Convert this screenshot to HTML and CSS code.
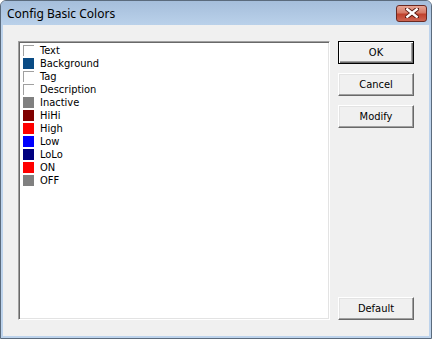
FILE: index.html
```html
<!DOCTYPE html>
<html>
<head>
<meta charset="utf-8">
<link rel="stylesheet" href="styles.css">
</head>
<body>
<div class="window">
  <div class="titlebar">
    <span class="title">Config Basic Colors</span>
    <div class="close">
      <svg width="14" height="10" viewBox="0 0 14 10">
        <path d="M2 1 L12 9 M12 1 L2 9" stroke="#5a1a10" stroke-width="4.2" stroke-linecap="square"/>
        <path d="M2.3 1.3 L11.7 8.7 M11.7 1.3 L2.3 8.7" stroke="#ffffff" stroke-width="2.4" stroke-linecap="square"/>
      </svg>
    </div>
  </div>
  <div class="client">
    <div class="listbox">
      <div class="item"><span class="sw sw-white"></span><span>Text</span></div>
      <div class="item"><span class="sw c-bg"></span><span>Background</span></div>
      <div class="item"><span class="sw sw-white"></span><span>Tag</span></div>
      <div class="item"><span class="sw sw-white"></span><span>Description</span></div>
      <div class="item"><span class="sw c-gray"></span><span>Inactive</span></div>
      <div class="item"><span class="sw c-maroon"></span><span>HiHi</span></div>
      <div class="item"><span class="sw c-red"></span><span>High</span></div>
      <div class="item"><span class="sw c-blue"></span><span>Low</span></div>
      <div class="item"><span class="sw c-navy"></span><span>LoLo</span></div>
      <div class="item"><span class="sw c-red"></span><span>ON</span></div>
      <div class="item"><span class="sw c-gray"></span><span>OFF</span></div>
    </div>
    <div class="buttons">
      <button class="btn btn-default">OK</button>
      <button class="btn">Cancel</button>
      <button class="btn">Modify</button>
      <div class="spacer"></div>
      <button class="btn">Default</button>
    </div>
  </div>
</div>
</body>
</html>
```

FILE: styles.css
```css
html, body {
  margin: 0;
  padding: 0;
  background: #ffffff;
}

.window {
  width: 432px;
  height: 339px;
  box-sizing: border-box;
  border: 1px solid #5b6b7d;
  border-radius: 6px 6px 0 0;
  background: #bdd3ec;
  display: flex;
  flex-direction: column;
  overflow: hidden;
}

.titlebar {
  height: 24px;
  display: flex;
  align-items: center;
  padding: 0 4px 0 6px;
  background: linear-gradient(#a5bedb, #bad1ea);
  flex: none;
}

.title {
  font-family: "Segoe UI", "Noto Sans", sans-serif;
  font-size: 12px;
  color: #000;
  flex: 1;
  padding-top: 1px;
}

.close {
  width: 29px;
  height: 15px;
  border: 1px solid #6b2a22;
  border-radius: 3px;
  background: linear-gradient(#e7a595 0%, #d67a66 45%, #c0412c 55%, #cd6552 100%);
  display: flex;
  align-items: center;
  justify-content: center;
}

.client {
  margin: 0 2px 2px 2px;
  flex: 1;
  background: #f0f0f0;
  display: flex;
  padding: 16px 15px 16px 15px;
  gap: 8px;
}

.listbox {
  width: 312px;
  box-sizing: border-box;
  background: #ffffff;
  border-top: 1px solid #a0a0a0;
  border-left: 1px solid #a0a0a0;
  border-right: 1px solid #ffffff;
  border-bottom: 1px solid #ffffff;
  box-shadow: inset 1px 1px 0 #696969, inset -1px -1px 0 #e3e3e3;
  padding: 2px 2px;
  display: flex;
  flex-direction: column;
}

.item {
  height: 13px;
  display: flex;
  align-items: center;
  font-family: "DejaVu Sans Condensed", "DejaVu Sans", sans-serif;
  font-size: 11px;
  color: #000;
  line-height: 13px;
}

.sw {
  width: 11px;
  height: 11px;
  box-sizing: border-box;
  margin-left: 2px;
  margin-right: 6px;
}

.sw-white {
  background: #ffffff;
  border-top: 1px solid #a0a0a0;
  border-left: 1px solid #a0a0a0;
}

.c-bg { background: #0a4b84; }
.c-gray { background: #808080; }
.c-maroon { background: #800000; }
.c-red { background: #ff0000; }
.c-blue { background: #0000ff; }
.c-navy { background: #000080; }

.buttons {
  width: 76px;
  display: flex;
  flex-direction: column;
  gap: 9px;
}

.spacer {
  flex: 1;
}

.btn {
  height: 23px;
  width: 76px;
  box-sizing: border-box;
  margin: 0;
  padding: 0;
  font-family: "DejaVu Sans Condensed", "DejaVu Sans", sans-serif;
  font-size: 11px;
  color: #000;
  background: #f0f0f0;
  border-top: 1px solid #ffffff;
  border-left: 1px solid #ffffff;
  border-right: 1px solid #696969;
  border-bottom: 1px solid #696969;
  box-shadow: inset -1px -1px 0 #a0a0a0, inset 1px 1px 0 #e3e3e3;
  flex: none;
}

.btn-default {
  border: 1px solid #000000;
  box-shadow: inset 1px 1px 0 #ffffff, inset -1px -1px 0 #696969, inset -2px -2px 0 #a0a0a0;
}
```
